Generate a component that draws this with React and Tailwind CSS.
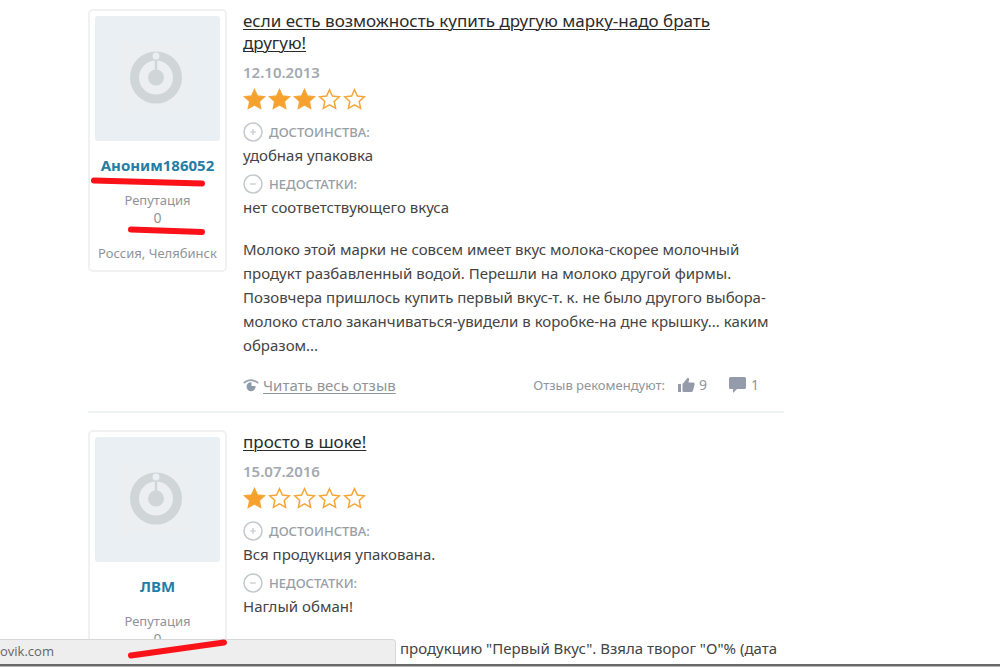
const reviews = [
  {
    author: 'Аноним186052',
    reputation: 0,
    place: 'Россия, Челябинск',
    title: 'если есть возможность купить другую марку-надо брать\nдругую!',
    date: '12.10.2013',
    rating: 3,
    pros: 'удобная упаковка',
    cons: 'нет соответствующего вкуса',
    text: 'Молоко этой марки не совсем имеет вкус молока-скорее молочный\nпродукт разбавленный водой. Перешли на молоко другой фирмы.\nПозовчера пришлось купить первый вкус-т. к. не было другого выбора-\nмолоко стало заканчиваться-увидели в коробке-на дне крышку... каким\nобразом...',
    likes: 9,
    comments: 1,
  },
  {
    author: 'ЛВМ',
    reputation: 0,
    title: 'просто в шоке!',
    date: '15.07.2016',
    rating: 1,
    pros: 'Вся продукция упакована.',
    cons: 'Наглый обман!',
    text: 'продукцию "Первый Вкус". Взяла творог "О"% (дата',
    indented: true,
  },
];

function Avatar() {
  return (
    <svg viewBox="0 0 125 125" className="block w-full rounded-[3px] bg-[#eaeff3]" aria-hidden="true">
      <rect x="27" y="27" width="69" height="69" fill="#ebeff2" />
      <circle cx="61" cy="61.500" r="21.500" fill="none" stroke="#d0d5d8" strokeWidth="9" />
      <circle cx="61" cy="61.500" r="8" fill="#d0d5d8" />
      <path d="M61 56V44" stroke="#d0d5d8" strokeWidth="2.500" />
      <circle cx="61" cy="40" r="3.500" fill="#eaeff3" />
    </svg>
  );
}

function Star({ filled }) {
  return (
    <svg viewBox="0 0 25 22" className="h-[22px] w-[25px]" aria-hidden="true">
      <path
        d="M11.500 1.700l2.900 6.300 6.900.8-5.100 4.700 1.400 6.800-6.100-3.400-6.100 3.400 1.400-6.800-5.100-4.700 6.900-.8z"
        fill={filled ? '#f6a02d' : '#ffffff'}
        stroke="#f6a537"
        strokeWidth="1.500"
      />
    </svg>
  );
}

function Label({ minus, children }) {
  return (
    <h3 className="flex h-5 items-center gap-[6px] text-[13px] font-medium text-[#989ea4]">
      <svg viewBox="0 0 20 20" className="size-5" fill="none" stroke="#c3c8cc" aria-hidden="true">
        <circle cx="10" cy="10" r="9" strokeWidth="1.500" />
        <path d={minus ? 'M7 10h6' : 'M7 10h6M10 7v6'} strokeWidth="1.200" />
      </svg>
      {children}
    </h3>
  );
}

function Stroke({ d, className, width, height }) {
  return (
    <svg className={className} width={width} height={height} fill="none" aria-hidden="true">
      <path d={d} stroke="#fb1219" strokeWidth="6" strokeLinecap="round" />
    </svg>
  );
}

function Review({ review }) {
  return (
    <article className="flex items-start gap-4 border-b-2 border-[#edf0f0]">
      <aside className="flex w-[139px] shrink-0 flex-col items-center rounded-[5px] border-2 border-[#f1f1f1] p-[5px] pb-2 text-center text-[13px] leading-[18px] text-[#909499]">
        <Avatar />
        <a href="#author" className="mt-[14px] text-[15px] leading-5 font-bold text-[#237da5]">{review.author}</a>
        <p className="mt-4">Репутация</p>
        <p className="text-sm leading-[18px]">{review.reputation}</p>
        <p className="mt-[17px] whitespace-nowrap">{review.place}</p>
      </aside>
      <div className="min-w-0 flex-1 pt-px text-[15px] leading-6 text-[#444444]">
        <h2 className="text-[17px] leading-[22px] whitespace-pre text-[#2b2b2b]">
          <a href="#review" className="underline decoration-1 underline-offset-2">{review.title}</a>
        </h2>
        <p className="mt-2 text-[15px] leading-5 font-semibold text-[#a3a9ae]">{review.date}</p>
        <div className="mt-[6px] mb-3 flex" role="img" aria-label={`${review.rating} / 5`}>
          {[1, 2, 3, 4, 5].map((n) => <Star key={n} filled={n <= review.rating} />)}
        </div>
        <Label>ДОСТОИНСТВА:</Label>
        <p className="mt-px mb-[7px]">{review.pros}</p>
        <Label minus>НЕДОСТАТКИ:</Label>
        <p className="mt-px">{review.cons}</p>
        <p className={review.indented ? 'mt-[18px] pl-[157px] whitespace-pre' : 'mt-[18px] whitespace-pre'}>{review.text}</p>
        {review.likes && (
          <footer className="mt-[18px] mb-4 flex h-5 items-center text-[#8f959b]">
            <svg viewBox="0 0 16 14" className="mr-1 h-[14px] w-4" fill="none" aria-hidden="true">
              <path d="M.7 5Q7-.8 15.300 5" stroke="#9aa4b0" strokeWidth="1.700" />
              <path d="M8.500 4.200A4.500 4.500 0 1 0 12.500 8H8.500z" fill="#8f9bab" />
            </svg>
            <a href="#full" className="text-[15px] underline decoration-1 underline-offset-2">Читать весь отзыв</a>
            <span className="ml-auto text-[13px]">Отзыв рекомендуют:</span>
            <button className="ml-[13px] flex items-center gap-1 text-sm">
              <svg viewBox="0 0 17 16" className="h-4 w-[17px]" fill="#949cab" aria-hidden="true">
                <path d="M0 7h3v8H0zM4.500 7L9.500 1c1-.3 1.800.4 1.600 1.500L10.500 5.500H15c1.200 0 1.900.9 1.600 2L15 13.500c-.3 1-1 1.500-2 1.500H6c-1 0-1.500-.5-1.500-1.500z" />
              </svg>
              {review.likes}
            </button>
            <button className="mr-[25px] ml-[22px] flex items-center gap-[5px] text-sm">
              <svg viewBox="0 0 17 16" className="h-4 w-[17px]" fill="#949cab" aria-hidden="true">
                <path d="M1.500 0h14Q17 0 17 1.500v9Q17 12 15.500 12H8l-4 4v-4H1.500Q0 12 0 10.500v-9Q0 0 1.500 0z" />
              </svg>
              {review.comments}
            </button>
          </footer>
        )}
      </div>
    </article>
  );
}

export default function App() {
  return (
    <div className="relative h-screen overflow-hidden bg-white font-['Noto_Sans','Open_Sans',sans-serif]">
      <main className="mr-[216px] ml-[88px] flex flex-col gap-[17px] pt-[9px]">
        {reviews.map((review) => <Review key={review.author} review={review} />)}
      </main>
      <div className="absolute bottom-0 left-0 w-full">
        <div className="flex h-[25px] w-[396px] items-center rounded-tr-[4px] border-t border-r border-[#d8d8d8] bg-[#eeeeee] font-['Open_Sans',sans-serif] text-[13px] text-[#666666]">
          ovik.com
        </div>
        <div className="h-[3px] border-b border-[#b5b5b5] bg-[#686868]" />
      </div>
      <Stroke className="absolute top-[176px] left-[88px]" width={122} height={12} d="M6 4.500L114 7.500" />
      <Stroke className="absolute top-[224px] left-[124px]" width={84} height={12} d="M7 5.500L78 8" />
      <Stroke className="absolute top-[636px] left-[124px]" width={108} height={24} d="M7 19.500L100 6.500" />
    </div>
  );
}
